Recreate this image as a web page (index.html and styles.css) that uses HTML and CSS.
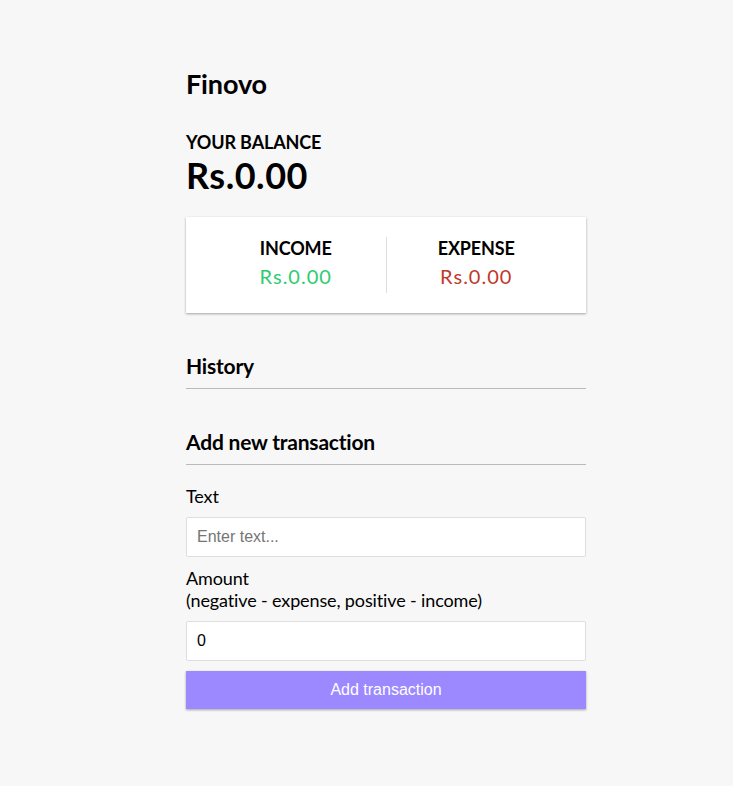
FILE: index.html
```html
<!DOCTYPE html>
<html lang="en">
<head>
<meta charset="UTF-8">
<title>Finovo</title>
<link rel="stylesheet" href="styles.css">
</head>
<body>
<div class="container">
  <h2 class="brand">Finovo</h2>
  <h4 class="label-upper">Your Balance</h4>
  <h1 class="balance">Rs.0.00</h1>
  <div class="inc-exp-container">
    <div class="inc-exp-col divided">
      <h4 class="label-upper">Income</h4>
      <p class="money plus">Rs.0.00</p>
    </div>
    <div class="inc-exp-col">
      <h4 class="label-upper">Expense</h4>
      <p class="money minus">Rs.0.00</p>
    </div>
  </div>
  <h3 class="section-title">History</h3>
  <ul class="list"></ul>
  <h3 class="section-title">Add new transaction</h3>
  <form class="form">
    <div class="form-control">
      <label class="field-label" for="text">Text</label>
      <input class="field-input" type="text" id="text" placeholder="Enter text...">
    </div>
    <div class="form-control">
      <label class="field-label" for="amount">Amount <br>(negative - expense, positive - income)</label>
      <input class="field-input" type="number" id="amount" value="0">
    </div>
    <button class="btn" type="button">Add transaction</button>
  </form>
</div>
</body>
</html>
```
FILE: styles.css
```css
* {
  box-sizing: border-box;
}

html {
  font-size: 18px;
}

body {
  background-color: #f7f7f7;
  margin: 0;
  font-family: Lato, "Open Sans", sans-serif;
  font-size: 18px;
  letter-spacing: -0.13px;
  color: #000;
}

.container {
  width: 400px;
  margin: 0 0 0 186px;
  padding: 67px 0 30px;
}

.brand {
  font-size: 27px;
  margin: 0 0 31px;
}

.label-upper {
  margin: 0;
  font-size: 18px;
  text-transform: uppercase;
}

.balance {
  font-size: 36px;
  letter-spacing: 0.5px;
  margin: 0;
}

.inc-exp-container {
  background-color: #fff;
  box-shadow: 0 1px 3px rgba(0, 0, 0, 0.12), 0 1px 2px rgba(0, 0, 0, 0.24);
  padding: 20px;
  display: flex;
  justify-content: space-between;
  margin: 20px 0;
}

.inc-exp-col {
  flex: 1;
  text-align: center;
}

.divided {
  border-right: 1px solid #dedede;
}

.money {
  font-size: 20px;
  letter-spacing: 1px;
  margin: 5px 0;
}

.plus {
  color: #2ecc71;
}

.minus {
  color: #c0392b;
}

.section-title {
  font-size: 21px;
  letter-spacing: -0.2px;
  border-bottom: 1px solid #bbb;
  padding-bottom: 10px;
  margin: 40px 0 10px;
}

.list {
  list-style-type: none;
  padding: 0;
  margin: 0 0 40px;
}

.form {
  margin: 0;
}

.field-label {
  display: inline-block;
  margin: 10px 0;
}

.field-input {
  border: 1px solid #dedede;
  border-radius: 2px;
  display: block;
  font-family: "Liberation Sans", Arial, sans-serif;
  font-size: 16px;
  letter-spacing: 0;
  padding: 10px;
  width: 100%;
  background: #fff;
  color: #000;
  margin: 0;
}

.field-input::placeholder {
  color: #757575;
}

.btn {
  cursor: pointer;
  background-color: #9c88ff;
  box-shadow: 0 1px 3px rgba(0, 0, 0, 0.12), 0 1px 2px rgba(0, 0, 0, 0.24);
  color: #fff;
  border: 0;
  display: block;
  font-family: "Liberation Sans", Arial, sans-serif;
  font-size: 16px;
  letter-spacing: 0;
  margin: 10px 0 0;
  padding: 10px;
  width: 100%;
}
```
